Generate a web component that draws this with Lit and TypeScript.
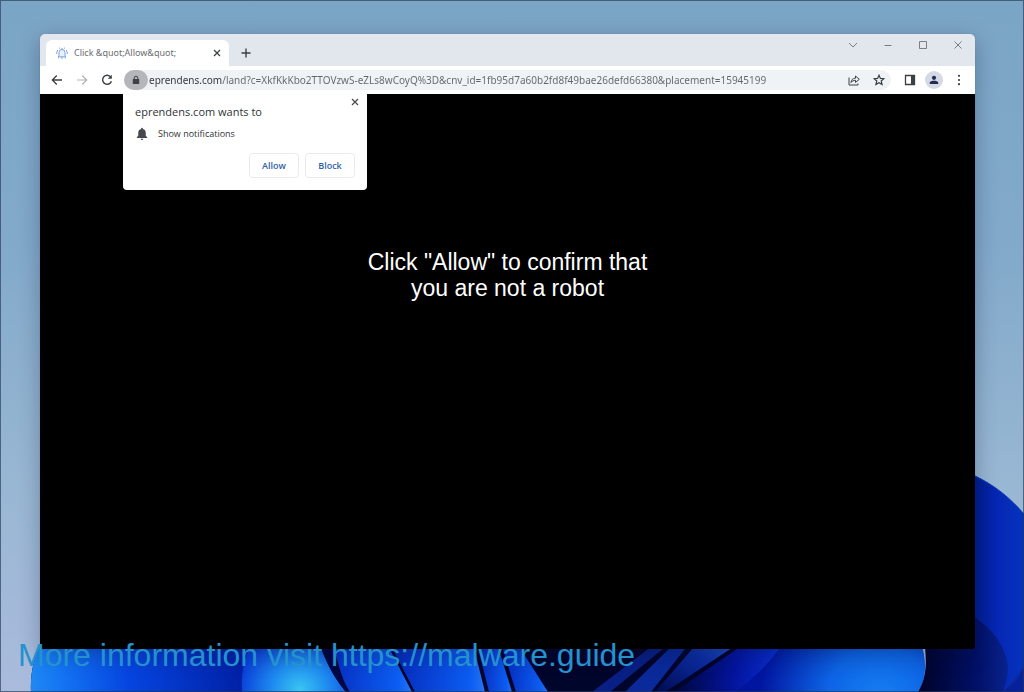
import { LitElement, html, css, svg } from "lit";
import { customElement } from "lit/decorators.js";

const UI_FONT = css`"Noto Sans", "Open Sans", sans-serif`;

@customElement("desk-wallpaper")
class DeskWallpaper extends LitElement {
  static styles = css`
    :host { display: block; }
    svg { display: block; width: 100%; height: 100%; }
  `;
  render() {
    return html`
      <svg viewBox="0 0 1024 692" preserveAspectRatio="none" aria-hidden="true">
        <defs>
          <linearGradient id="sky" x1="0" y1="0" x2="0" y2="1">
            <stop offset="0" stop-color="#7ba5c5" /><stop offset=".35" stop-color="#82a9ca" />
            <stop offset=".7" stop-color="#98b7d3" /><stop offset="1" stop-color="#aabbdc" />
          </linearGradient>
          <linearGradient id="rim" x1="0" y1="0" x2="1" y2="0">
            <stop offset="0" stop-color="#001b86" /><stop offset=".5" stop-color="#0527b4" /><stop offset="1" stop-color="#0533bd" />
          </linearGradient>
          <linearGradient id="leaf" x1="0" y1="0" x2="1" y2="0">
            <stop offset="0" stop-color="#2088f2" /><stop offset=".12" stop-color="#1477f4" />
            <stop offset=".42" stop-color="#0645e0" /><stop offset="1" stop-color="#001a9c" />
          </linearGradient>
          <radialGradient id="cyan" cx="300" cy="690" r="60" gradientUnits="userSpaceOnUse">
            <stop offset="0" stop-color="#39c6f2" /><stop offset=".45" stop-color="#1f8df0" /><stop offset="1" stop-color="#0a40da" />
          </radialGradient>
          <linearGradient id="petal" x1="0" y1="0" x2="1" y2="0">
            <stop offset="0" stop-color="#0526b8" /><stop offset=".85" stop-color="#0c5df2" /><stop offset="1" stop-color="#2774f5" />
          </linearGradient>
          <linearGradient id="streak" x1="0" y1="1" x2="1" y2="0">
            <stop offset="0" stop-color="#000a50" /><stop offset=".6" stop-color="#0d2fa8" /><stop offset="1" stop-color="#2b62dc" />
          </linearGradient>
          <linearGradient id="sweep" x1="0" y1="0" x2="1" y2="0">
            <stop offset="0" stop-color="#00063c" /><stop offset=".55" stop-color="#0415a0" /><stop offset="1" stop-color="#0a35dd" />
          </linearGradient>
          <radialGradient id="glow" cx="880" cy="700" r="120" gradientUnits="userSpaceOnUse">
            <stop offset="0" stop-color="#1680f4" /><stop offset=".45" stop-color="#0d63e4" /><stop offset="1" stop-color="#0116a0" />
          </radialGradient>
          <linearGradient id="dusk" x1="0" y1="0" x2="1" y2="0">
            <stop offset="0" stop-color="#000328" /><stop offset=".55" stop-color="#021067" /><stop offset="1" stop-color="#0b2ca0" />
          </linearGradient>
        </defs>
        ${svg`
          <rect width="1024" height="692" fill="url(#sky)" />
          <path d="M31 692C30 672 34 656 44 640H800V692Z" fill="#00052c" />
          <path d="M31 692C30 672 34 656 44 640H262L242 692Z" fill="url(#leaf)" />
          <path d="M242 692C241 672 244 660 252 640H318C325 660 334 678 346 692Z" fill="url(#cyan)" />
          <path d="M318 640H385L412 692H346C334 678 325 660 318 640Z" fill="url(#petal)" />
          <path d="M318 640L332 640C338 664 342 680 350 692H346C334 678 325 660 318 640Z" fill="#010843" />
          <path d="M388 640H472L485 692H415Z" fill="url(#petal)" />
          <path d="M476 640H496L512 692H489Z" fill="url(#petal)" />
          <path d="M500 640H515L548 692H516Z" fill="url(#petal)" />
          <path d="M592 692L660 640H674L610 692Z" fill="#082085" />
          <path d="M625 692L678 640H692L651 692Z" fill="#0a2a9b" />
          <path d="M655 692L700 640H744L665 692Z" fill="url(#streak)" />
          <path d="M674 692L750 640H786C770 664 752 680 736 692Z" fill="url(#sweep)" />
          <path d="M736 692C752 680 770 664 786 640H920C928 662 926 680 918 692Z" fill="url(#glow)" />
          <path d="M918 692C929 674 927 654 920 610L975 476C996 486 1012 500 1024 514V692Z" fill="url(#dusk)" />
          <path d="M970 473C993 484 1010 498 1024 515V665C1018 675 1012 684 1003 692C1011 672 1009 655 996 637C989 628 981 621 970 614Z" fill="url(#rim)" />
          <path d="M975 476C996 486 1010 498 1024 514" fill="none" stroke="#0d43bd" stroke-width="1" />
          <path d="M1008 692C1014 684 1020 676 1024 668V692Z" fill="#07209b" />
        `}
      </svg>
    `;
  }
}

@customElement("browser-tabs")
class BrowserTabs extends LitElement {
  static styles = css`
    :host { display: flex; align-items: stretch; justify-content: space-between; height: 32px; padding: 0 0 0 6px; box-sizing: border-box; background: #e2e6ed; font-family: ${UI_FONT}; }
    button { border: 0; padding: 0; background: none; display: grid; place-items: center; color: #3c4043; }
    svg { display: block; fill: none; stroke: currentColor; }
    .left { display: flex; align-items: flex-end; }
    .tab { display: flex; align-items: center; width: 183px; height: 26px; padding: 0 6px 0 10px; box-sizing: border-box; border-radius: 6px 6px 0 0; background: #fff; }
    .favicon { color: #7ba3e6; }
    .title { flex: 1; margin-left: 6px; font-size: 9px; line-height: 14px; color: #6a6d71; white-space: nowrap; }
    .close { width: 12px; height: 14px; }
    .add { width: 20px; height: 26px; margin-left: 7px; }
    .controls { display: flex; }
    .controls button { width: 35px; height: 22px; color: #7b7e83; }
  `;
  render() {
    return html`
      <div class="left" role="tablist">
        <div class="tab" role="tab" aria-selected="true">
          <svg class="favicon" width="12" height="12" viewBox="0 0 12 12" stroke-width="1">
            <path d="M3 9V5.500a3 3 0 0 1 6 0V9l1 .8H2ZM5 11h2M6 2.500V1" fill="#eaf1ff" />
            <path d="M1.800 3A5 5 0 0 0 .8 7M10.200 3a5 5 0 0 1 1 4M3 1.400l1-.6M8 .8l1 .6M2 10.500l1.200.8M10 10.500l-1.200.8" />
          </svg>
          <span class="title">Click &amp;quot;Allow&amp;quot;</span>
          <button class="close" aria-label="Close tab">
            <svg width="8" height="8" viewBox="0 0 8 8" stroke-width="1.300"><path d="M1 1l6 6M7 1L1 7" /></svg>
          </button>
        </div>
        <button class="add" aria-label="New tab">
          <svg width="10" height="10" viewBox="0 0 10 10" stroke-width="1.400"><path d="M5 .5v9M.5 5h9" /></svg>
        </button>
      </div>
      <div class="controls">
        <button aria-label="Search tabs"><svg width="10" height="10" viewBox="0 0 10 10"><path d="M1 3l4 4 4-4" /></svg></button>
        <button aria-label="Minimize"><svg width="10" height="10" viewBox="0 0 10 10"><path d="M1.500 5.500h7" /></svg></button>
        <button aria-label="Maximize"><svg width="10" height="10" viewBox="0 0 10 10"><path d="M1.500 1.500h7v7h-7z" /></svg></button>
        <button aria-label="Close"><svg width="10" height="10" viewBox="0 0 10 10"><path d="M1.500 1.500l7 7M8.500 1.500l-7 7" /></svg></button>
      </div>
    `;
  }
}

@customElement("browser-toolbar")
class BrowserToolbar extends LitElement {
  static styles = css`
    :host { display: flex; align-items: center; height: 28px; padding: 0 4px; box-sizing: border-box; background: #fff; font-family: ${UI_FONT}; }
    button { border: 0; padding: 0; background: none; display: grid; place-items: center; flex: none; width: 25px; height: 24px; color: #3c4043; }
    svg { display: block; fill: none; stroke: currentColor; }
    .dim { color: #b1b3b6; }
    .omnibox { flex: 1; display: flex; align-items: center; height: 20px; margin: 0 6px 0 5px; border-radius: 10px; background: #f0f3f5; min-width: 0; }
    .omnibox .lock { width: 24px; height: 20px; border-radius: 10px; background: #b4b6b9; color: #3f4245; }
    .url { flex: 1; min-width: 0; height: 20px; border: 0; padding: 0 0 0 1px; outline: 0; font: 10px/20px ${UI_FONT}; color: transparent; background: linear-gradient(to right, #303337 74px, #62666a 74px); background-clip: text; -webkit-background-clip: text; }
    .avatar { width: 18px; height: 18px; margin: 0 3px; border-radius: 9px; background: #d5d9e5; color: #272a55; }
  `;
  render() {
    return html`
      <button aria-label="Back"><svg width="12" height="12" viewBox="0 0 12 12" stroke-width="1.300"><path d="M11 6H1.500M5.800 1.500L1.300 6l4.500 4.500" /></svg></button>
      <button class="dim" aria-label="Forward"><svg width="12" height="12" viewBox="0 0 12 12" stroke-width="1.200"><path d="M1 6h9.500M6.200 1.500L10.700 6l-4.500 4.500" /></svg></button>
      <button aria-label="Reload"><svg width="12" height="12" viewBox="0 0 12 12" stroke-width="1.400"><path d="M9.800 3.200A4.500 4.500 0 1 0 10.400 7.200" /><path d="M10.800.8v4H6.800Z" fill="currentColor" stroke="none" /></svg></button>
      <div class="omnibox">
        <button class="lock" aria-label="Site information">
          <svg width="10" height="10" viewBox="0 0 10 10"><path d="M3.200 4.500V3a1.800 1.800 0 0 1 3.600 0v1.500" stroke-width="1" /><rect x="1.800" y="4" width="6.400" height="5" rx=".6" fill="currentColor" stroke="none" /></svg>
        </button>
        <input class="url" type="text" aria-label="Address" spellcheck="false" value="eprendens.com/land?c=XkfKkKbo2TTOVzwS-eZLs8wCoyQ%3D&amp;cnv_id=1fb95d7a60b2fd8f49bae26defd66380&amp;placement=15945199" />
        <button aria-label="Share"><svg width="12" height="12" viewBox="0 0 12 12" stroke-width="1"><path d="M1 3.500v7.500h9V9.500" /><path d="M3 8.500C3.300 5.500 5 4.200 7.500 4.200V2L11.300 5.300 7.500 8.400V6.300C5.500 6.300 4.200 7 3 8.500Z" /></svg></button>
        <button aria-label="Bookmark"><svg width="12" height="12" viewBox="0 0 12 12" stroke-width="1.200"><path d="M6 1.200l1.400 3.200 3.500.3-2.700 2.300.9 3.500L6 8.700l-3.100 1.800.9-3.500L1.100 4.700l3.500-.3Z" /></svg></button>
      </div>
      <button aria-label="Side panel"><svg width="12" height="12" viewBox="0 0 12 12" stroke-width="1.300"><path d="M1.500 1.500h9v9h-9z" /><path d="M7 1.500h3.500v9H7z" fill="currentColor" stroke="none" /></svg></button>
      <button class="avatar" aria-label="Profile"><svg width="10" height="10" viewBox="0 0 10 10" stroke="none"><circle cx="5" cy="2.800" r="2.100" fill="currentColor" stroke="none" /><path d="M.8 9V7.600C.8 6.200 3.200 5.700 5 5.700s4.200.5 4.200 1.900V9Z" fill="currentColor" stroke="none" /></svg></button>
      <button aria-label="Menu"><svg width="12" height="12" viewBox="0 0 12 12"><g fill="currentColor" stroke="none"><circle cx="6" cy="1.800" r="1.100" /><circle cx="6" cy="6" r="1.100" /><circle cx="6" cy="10.200" r="1.100" /></g></svg></button>
    `;
  }
}

@customElement("permission-prompt")
class PermissionPrompt extends LitElement {
  static styles = css`
    :host { display: block; width: 244px; padding: 10px 12px 12px; box-sizing: border-box; border-radius: 0 0 4px 4px; background: #fff; font-family: "Open Sans", "Noto Sans", sans-serif; color: #303337; }
    .head { display: flex; justify-content: space-between; }
    h2 { margin: 0; font-size: 11px; line-height: 18px; font-weight: 400; }
    .row { display: flex; align-items: center; gap: 9px; margin-top: 4px; font-size: 9px; line-height: 18px; }
    .actions { display: flex; justify-content: flex-end; gap: 6px; margin-top: 10px; }
    svg { display: block; }
    button { padding: 0; background: none; font-family: inherit; }
    .close { display: grid; place-items: center; width: 12px; height: 12px; border: 0; margin: -7px -6px 0 0; }
    .action { width: 50px; height: 25px; border: 1px solid #e9ebef; border-radius: 4px; color: #2f62ab; font-size: 9px; font-weight: 600; }
  `;
  render() {
    return html`
      <div class="head">
        <h2>eprendens.com wants to</h2>
        <button class="close" aria-label="Dismiss"><svg width="8" height="8" viewBox="0 0 8 8" fill="none" stroke="#4a4d51" stroke-width="1.300"><path d="M1 1l6 6M7 1L1 7" /></svg></button>
      </div>
      <div class="row">
        <svg width="14" height="14" viewBox="0 0 13 13" fill="#45484c"><path d="M6.500.7a.8.8 0 0 1 .8.800v.4C9 2.300 10 3.700 10 5.400v2.800l1.300 1.300v.8H1.700v-.8L3 8.200V5.400C3 3.700 4 2.300 5.700 1.900v-.4A.8.8 0 0 1 6.500.7ZM5.300 10.900h2.400a1.200 1.200 0 0 1-2.400 0Z" /></svg>
        <span>Show notifications</span>
      </div>
      <div class="actions">
        <button class="action">Allow</button>
        <button class="action">Block</button>
      </div>
    `;
  }
}

@customElement("app-root")
class AppRoot extends LitElement {
  static styles = css`
    :host { display: block; }
    .desktop { position: relative; isolation: isolate; display: flex; min-height: 100vh; padding: 34px 49px 43px 40px; box-sizing: border-box; overflow: hidden; }
    .wallpaper { position: absolute; inset: 0; z-index: -1; }
    .edge { position: absolute; inset: 0; border: 1px solid rgba(35, 55, 85, 0.65); pointer-events: none; }
    .window { flex: 1; display: flex; flex-direction: column; min-width: 0; border-radius: 5px 5px 3px 3px; overflow: hidden; box-shadow: 0 0 1px rgba(60, 70, 90, 0.5), 0 6px 22px rgba(0, 10, 40, 0.28); }
    .page { position: relative; flex: 1; padding: 155px 0 20px; background: #000; color: #fff; }
    .prompt { position: absolute; left: 83px; top: 0; margin-top: -1px; }
    h1 { margin: 0; font: 400 23px/26px "Liberation Sans", Arial, sans-serif; text-align: center; }
    .watermark { position: absolute; left: 18px; bottom: 18px; margin: 0; font: 32px/38px "Liberation Sans", Arial, sans-serif; color: #2592ce; white-space: nowrap; }
  `;
  render() {
    return html`
      <div class="desktop">
        <desk-wallpaper class="wallpaper"></desk-wallpaper>
        <main class="window">
          <browser-tabs></browser-tabs>
          <browser-toolbar></browser-toolbar>
          <section class="page">
            <permission-prompt class="prompt" role="dialog" aria-label="Notification permission"></permission-prompt>
            <h1>Click "Allow" to confirm that<br />you are not a robot</h1>
          </section>
        </main>
        <div class="edge"></div>
        <p class="watermark">More information visit https://malware.guide</p>
      </div>
    `;
  }
}
